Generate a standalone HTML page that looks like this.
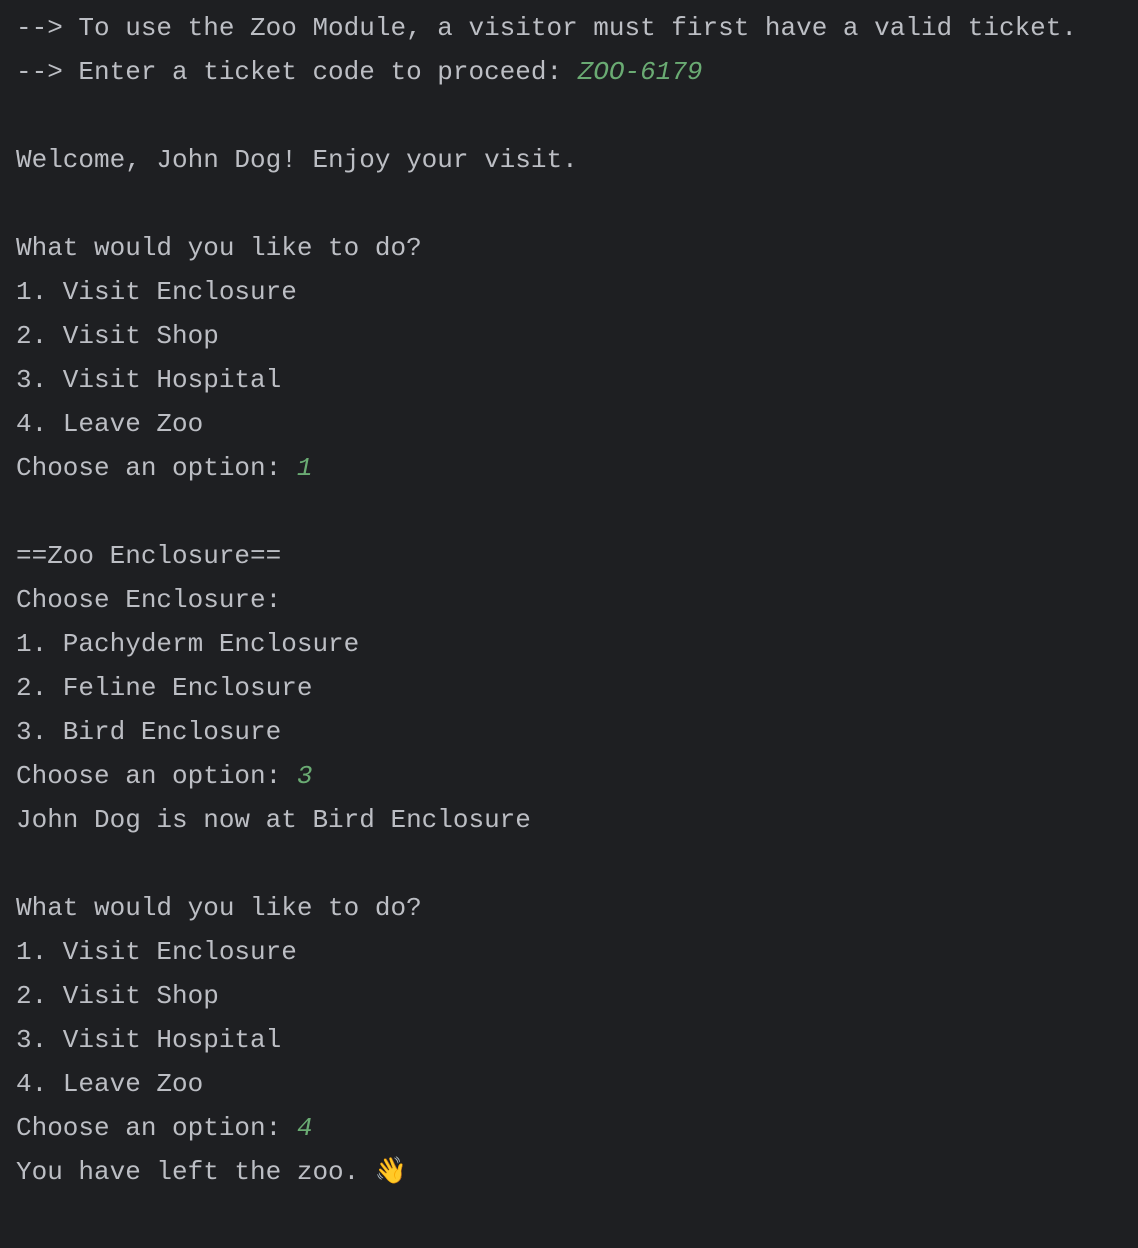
<!DOCTYPE html>
<html><head><meta charset="utf-8"><style>
html,body{margin:0;padding:0;background:#1e1f22;width:1138px;height:1248px;overflow:hidden}
pre{margin:0;padding:6px 0 0 16px;font-family:"Liberation Mono","DejaVu Sans Mono",monospace;font-size:26px;line-height:44px;color:#bcbec4;white-space:pre}
i{color:#6aab73;font-style:italic}
</style></head><body><pre>--> To use the Zoo Module, a visitor must first have a valid ticket.
--> Enter a ticket code to proceed: <i>ZOO-6179</i>

Welcome, John Dog! Enjoy your visit.

What would you like to do?
1. Visit Enclosure
2. Visit Shop
3. Visit Hospital
4. Leave Zoo
Choose an option: <i>1</i>

==Zoo Enclosure==
Choose Enclosure:
1. Pachyderm Enclosure
2. Feline Enclosure
3. Bird Enclosure
Choose an option: <i>3</i>
John Dog is now at Bird Enclosure

What would you like to do?
1. Visit Enclosure
2. Visit Shop
3. Visit Hospital
4. Leave Zoo
Choose an option: <i>4</i>
You have left the zoo. <span style="color:#f3c04a">👋</span></pre></body></html>
